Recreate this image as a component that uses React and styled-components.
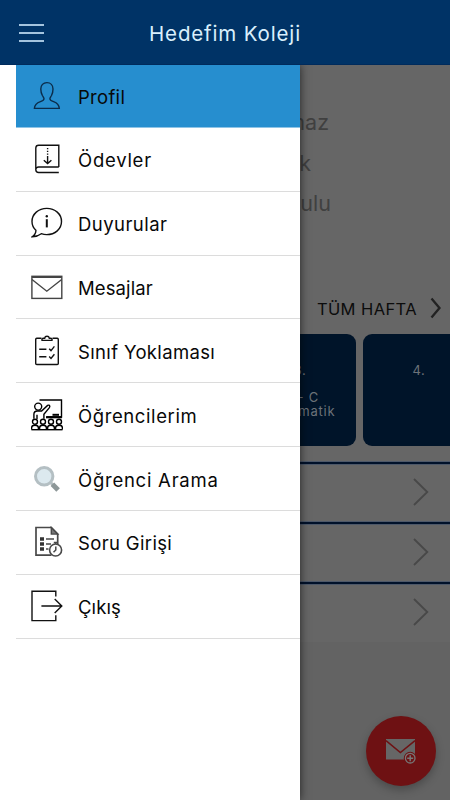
import React from 'react';
import styled, { createGlobalStyle } from 'styled-components';

const ProfileIcon = () => (
    <Icon viewBox="0 0 32 32" $color="#0b2c4a">
        <path d="M3.4 28.4H28.3C28.1 24.6 26.2 22.9 22.6 21.6C20.2 20.8 18.9 20.1 18.9 18.7C18.9 17.6 19.7 17 20.5 15.5C21.5 13.5 22 11.5 22 8.9C22 5.2 19.6 2.6 15.9 2.6C12.2 2.6 9.8 5.2 9.8 8.9C9.8 11.5 10.4 13.5 11.4 15.5C12.2 17 13 17.6 13 18.7C13 20.1 11.8 20.8 9.4 21.6C5.7 22.9 3.6 24.6 3.4 28.4Z" />
    </Icon>
);

const BookIcon = () => (
    <Icon viewBox="0 0 32 32">
        <path d="M27.8 24V2.3H7.6A2.8 2.8 0 0 0 4.8 5V26.8A2.8 2.8 0 0 0 7.6 29.5H27.8M27.8 24H7.6A2.8 2.8 0 0 0 4.8 26.8" />
        <path d="M16.6 5V13" strokeDasharray="1.3 1.4" />
        <path d="M16.6 13V20.3M12.8 17.2L16.6 20.6L20.4 17.2" />
    </Icon>
);

const InfoIcon = () => (
    <Icon viewBox="0 0 32 32">
        <path d="M4.9 23.2C2.2 20.8 1 17.8 1 14.5C1 7 7.5 1.4 15.8 1.4C24.1 1.4 30.5 7 30.5 14.5C30.5 22 24.1 27.6 15.8 27.6C13.8 27.6 12 27.3 10.3 26.7C7.5 28.8 4.3 29.8 1.2 29.8C3.8 28 5 25.8 4.9 23.2Z" />
        <path d="M15.8 12.2V20.4" strokeWidth="2" />
        <circle cx="15.8" cy="9.2" r="1.2" fill="#111" stroke="none" />
    </Icon>
);

const EnvelopeIcon = () => (
    <Icon viewBox="0 0 32 32" $color="#444">
        <rect x="0.9" y="5.3" width="29.9" height="22.1" />
        <path d="M1 6.4H30.7M1 8.5L15.8 20.2L30.7 8.5" />
    </Icon>
);

const ClipboardIcon = () => (
    <Icon viewBox="0 0 32 32">
        <path d="M10.5 3.3H5.8Q4.7 3.3 4.7 4.4V28.4Q4.7 29.5 5.8 29.5H26.2Q27.3 29.5 27.3 28.4V4.4Q27.3 3.3 26.2 3.3H21.5" />
        <path d="M11 5.4Q10.5 3.3 12.5 3.2H13.7Q14 1.3 16 1.3Q18 1.3 18.3 3.2H19.5Q21.5 3.3 21 5.4Z" />
        <path d="M8.2 14.2H15.4M8.2 21.8H15.4M18.2 13.7L20 15.6L23.4 11.4M18.2 21.5L20 23.4L23.4 19.2" />
    </Icon>
);

const ClassroomIcon = () => (
    <Icon viewBox="0 0 32 32" $color="#000">
        <path d="M8.5 1H30.5V18H16" />
        <path d="M15 18.2H30.8" strokeWidth="2.2" />
        <path d="M21.5 15.8H28" strokeWidth="2" />
        <circle cx="7.2" cy="7.6" r="3.5" />
        <path d="M2.9 19.8V15.2Q2.9 12 6.4 12H10.6L16.6 6.4Q18.3 5.5 18.8 7.2Q18.9 8 18.2 8.9L12.9 15.3V19.8M6 15.8V20" />
        {[4, 12, 20, 28].map((x) => (
            <g key={x}>
                <circle cx={x} cy="22.8" r="2.5" />
                <path d={`M${x - 3.4} 30.6V28.8Q${x - 3.4} 26.3 ${x} 26.3Q${x + 3.4} 26.3 ${x + 3.4} 28.8V30.6`} />
            </g>
        ))}
        <path d="M0.4 30.7H31.5" />
    </Icon>
);

const SearchIcon = () => (
    <Icon viewBox="0 0 32 32">
        <path d="M19.5 19.5L22.3 22.2" stroke="#b4bec1" strokeWidth="3" />
        <path d="M21.4 21.3L27.1 27" stroke="#8d9798" strokeWidth="5" />
        <circle cx="13.2" cy="13.3" r="8.7" fill="#dce9ef" stroke="#b4bfc3" strokeWidth="3" />
    </Icon>
);

const ExamIcon = () => (
    <Icon viewBox="0 0 32 32" $color="#494949">
        <path d="M20.5 29.1H5V1.5H20.3L26.7 8.1V18.5" strokeWidth="1.7" />
        <path d="M20.3 1.5V8.1H26.7Z" fill="#777" />
        <path d="M15 13H23M15 18H20M15 23H17.5" strokeWidth="1.5" />
        <path d="M9 13H13M9 18H13M9 23H13" stroke="#333" strokeWidth="3.4" />
        <circle cx="24.6" cy="24" r="6" fill="#fff" strokeWidth="1.6" />
        <path d="M24.8 20.5V24L22.5 26.2M22.8 16.6H26.4M24.6 16.6V18" strokeWidth="1.5" />
    </Icon>
);

const ExitIcon = () => (
    <Icon viewBox="0 0 32 32">
        <path d="M24.8 6.5V1.2H1V30.6H24.8V25.2M10.4 16H30.6M23.7 9L30.8 16L23.7 23" />
    </Icon>
);

const MailPlusIcon = () => (
    <svg width="32" height="28" viewBox="0 0 32 28" fill="none">
        <rect x="1" y="2" width="29" height="20.5" fill="#666" />
        <path d="M1 3.6L15.4 15.6L30 3.6" stroke="#6e1113" strokeWidth="1.5" />
        <circle cx="25.2" cy="21.2" r="6.4" fill="#6e1113" />
        <circle cx="25.2" cy="21.2" r="4.8" stroke="#777" strokeWidth="1.3" />
        <path d="M22.2 21.2H28.2M25.2 18.2V24.2" stroke="#777" strokeWidth="1.5" />
    </svg>
);

const menuItems = [
    { label: 'Profil', icon: ProfileIcon, active: true, spacing: '0.3px' },
    { label: 'Ödevler', icon: BookIcon, spacing: '0.75px' },
    { label: 'Duyurular', icon: InfoIcon, spacing: '0.45px' },
    { label: 'Mesajlar', icon: EnvelopeIcon, spacing: '0.1px' },
    { label: 'Sınıf Yoklaması', icon: ClipboardIcon, spacing: '0.35px' },
    { label: 'Öğrencilerim', icon: ClassroomIcon, spacing: '0.6px' },
    { label: 'Öğrenci Arama', icon: SearchIcon, spacing: '0.75px' },
    { label: 'Soru Girişi', icon: ExamIcon, spacing: '0.35px' },
    { label: 'Çıkış', icon: ExitIcon, spacing: '0.1px' },
];

const App = () => {
    return (
        <Page>
            <GlobalStyle />
            <Header>
                <MenuButton aria-label="Menü">
                    <MenuLine />
                    <MenuLine />
                    <MenuLine />
                </MenuButton>
                <Title>Hedefim Koleji</Title>
            </Header>
            <Body>
                <Content>
                    <ProfileInfo>
                        <InfoLine $width="329px">maz</InfoLine>
                        <InfoLine $width="311px">k</InfoLine>
                        <InfoLine $width="331px">ulu</InfoLine>
                    </ProfileInfo>
                    <WeekLink>
                        <WeekLabel>TÜM HAFTA</WeekLabel>
                        <svg width="12" height="22" viewBox="0 0 12 22" fill="none">
                            <path d="M1.5 1.5L9.5 11L1.5 20.5" stroke="#222" strokeWidth="2.3" />
                        </svg>
                    </WeekLink>
                    <Lessons>
                        <LessonCard>
                            <LessonNo>3.</LessonNo>
                            <LessonName>
                                11 - C<br />Matematik
                            </LessonName>
                        </LessonCard>
                        <LessonCard>
                            <LessonNo>4.</LessonNo>
                        </LessonCard>
                    </Lessons>
                    {[0, 1, 2].map((i) => (
                        <ListRow key={i}>
                            <svg width="16" height="28" viewBox="0 0 16 28" fill="none">
                                <path d="M1 1L14.3 14L1 27" stroke="#484848" strokeWidth="1.8" />
                            </svg>
                        </ListRow>
                    ))}
                </Content>
                <Drawer>
                    {menuItems.map(({ label, icon: ItemIcon, active, spacing }) => (
                        <MenuItem key={label} $active={active}>
                            <ItemIcon />
                            <MenuLabel $spacing={spacing}>{label}</MenuLabel>
                        </MenuItem>
                    ))}
                </Drawer>
                <ComposeButton aria-label="Yeni mesaj">
                    <MailPlusIcon />
                </ComposeButton>
            </Body>
        </Page>
    );
};

const GlobalStyle = createGlobalStyle`
    * {
        box-sizing: border-box;
    }

    body {
        margin: 0;
        font-family: Inter, "Liberation Sans", sans-serif;
    }
`;

const Page = styled.div`
    display: flex;
    flex-direction: column;
    width: 450px;
    height: 800px;
    overflow: hidden;
`;

const Header = styled.header`
    display: grid;
    grid-template-columns: 62px 1fr 62px;
    align-items: center;
    height: 65px;
    background: #003366;
    border-bottom: 1px solid #002b5c;
`;

const MenuButton = styled.button`
    display: flex;
    flex-direction: column;
    gap: 6px;
    width: 25px;
    margin: 1px 0 0 19px;
    padding: 0;
    background: none;
    border: none;
`;

const MenuLine = styled.span`
    height: 2px;
    background: #a4c4de;
`;

const Title = styled.h1`
    margin: 2px 0 0;
    color: #d9effc;
    font-size: 20.5px;
    font-weight: 400;
    letter-spacing: 0.85px;
    text-align: center;
    white-space: nowrap;
`;

const Body = styled.div`
    position: relative;
    flex: 1;
    background: #636363;
`;

const Content = styled.main`
    display: flex;
    flex-direction: column;
    background: #666;
`;

const ProfileInfo = styled.div`
    height: 229px;
    padding-top: 37px;
`;

const InfoLine = styled.div`
    width: ${({ $width }) => $width};
    height: 40.5px;
    color: #404040;
    font-size: 21.5px;
    line-height: 41px;
    text-align: right;
`;

const WeekLink = styled.div`
    display: flex;
    align-items: center;
    justify-content: flex-end;
    gap: 13px;
    height: 28px;
    padding-right: 8px;
`;

const WeekLabel = styled.span`
    margin-top: 2px;
    color: #0c0c0c;
    font-size: 16.5px;
    letter-spacing: 0.4px;
`;

const Lessons = styled.div`
    display: flex;
    gap: 7px;
    height: 140px;
    padding: 12px 0 16px 244px;
    overflow: hidden;
`;

const LessonCard = styled.div`
    display: flex;
    flex: none;
    flex-direction: column;
    align-items: center;
    width: 112px;
    height: 112px;
    padding-top: 27px;
    border-radius: 9px;
    background: #001429;
    color: #6c7278;
    font-size: 13px;
    letter-spacing: 0.75px;
    line-height: 14px;
`;

const LessonNo = styled.span`
    height: 29px;
    line-height: 18px;
`;

const LessonName = styled.span`
    text-align: center;
`;

const ListRow = styled.div`
    display: flex;
    align-items: center;
    justify-content: flex-end;
    height: 60px;
    padding: 0 21px 3px 0;
    border-top: 2px solid #00112a;
    box-shadow: inset 0 1px #4d5869, 0 -1px #4d5869;
`;

const Drawer = styled.nav`
    position: absolute;
    top: 0;
    left: 0;
    width: 300px;
    height: 100%;
    padding-left: 16px;
    background: #fff;
    box-shadow: 0 0 9px rgba(0, 0, 0, 0.65);
    clip-path: inset(0 -16px 0 0);
`;

const MenuItem = styled.div`
    display: flex;
    align-items: center;
    gap: 15px;
    height: ${({ $active }) => ($active ? '63px' : '63.83px')};
    padding-left: 15px;
    background: ${({ $active }) => ($active ? '#268ecf' : '#fff')};
    border-bottom: 1px solid ${({ $active }) => ($active ? '#8fc4e6' : '#dcdcdc')};
`;

const MenuLabel = styled.span`
    margin-top: 2px;
    color: #080808;
    font-size: 18.5px;
    letter-spacing: ${({ $spacing }) => $spacing};
    line-height: 24px;
    white-space: nowrap;
`;

const Icon = styled.svg`
    flex: none;
    width: 32px;
    height: 32px;
    fill: none;
    stroke: ${({ $color }) => $color || '#111'};
    stroke-width: 1.4;
`;

const ComposeButton = styled.button`
    position: absolute;
    right: 14px;
    bottom: 14px;
    display: flex;
    align-items: center;
    justify-content: center;
    width: 70px;
    height: 70px;
    padding: 0;
    border: none;
    border-radius: 50%;
    background: #6e1113;
    box-shadow: 0 4px 9px rgba(0, 0, 0, 0.25);
`;

export default App;
